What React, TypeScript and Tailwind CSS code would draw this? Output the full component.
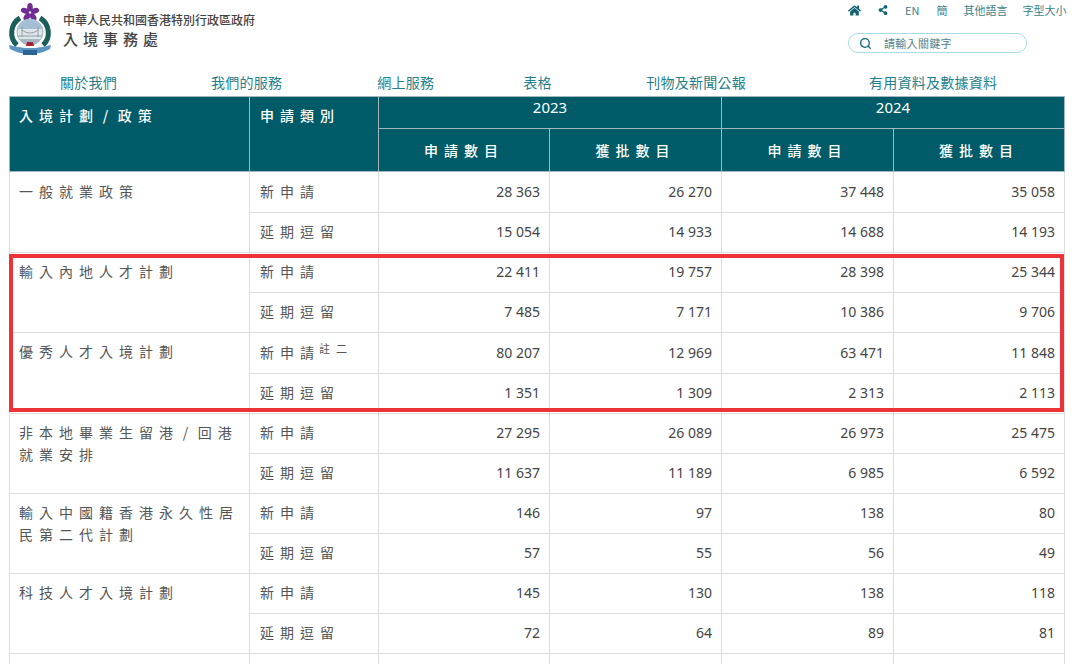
import { FaHome, FaShareAlt } from "react-icons/fa";
import { Search } from "lucide-react";

const CJK = "font-['Noto_Sans_CJK_TC','Noto_Sans_CJK_SC',sans-serif]";

const TOP_LINKS = [
  { label: "EN", className: "ml-[17px]" },
  { label: "簡", className: "ml-[17px]" },
  { label: "其他語言", className: "ml-[16px]" },
  { label: "字型大小", className: "ml-[15px]" },
];

const NAV = [
  { label: "關於我們", className: "ml-[60px]" },
  { label: "我們的服務", className: "ml-[94px]" },
  { label: "網上服務", className: "ml-[95px]" },
  { label: "表格", className: "ml-[89px]" },
  { label: "刊物及新聞公報", className: "ml-[94.5px]" },
  { label: "有用資料及數據資料", className: "ml-[123px]" },
];

const GROUPS = [
  {
    name: ["一般就業政策"],
    rows: [
      ["新申請", "28 363", "26 270", "37 448", "35 058"],
      ["延期逗留", "15 054", "14 933", "14 688", "14 193"],
    ],
  },
  {
    name: ["輸入內地人才計劃"],
    rows: [
      ["新申請", "22 411", "19 757", "28 398", "25 344"],
      ["延期逗留", "7 485", "7 171", "10 386", "9 706"],
    ],
  },
  {
    name: ["優秀人才入境計劃"],
    note: "註二",
    rows: [
      ["新申請", "80 207", "12 969", "63 471", "11 848"],
      ["延期逗留", "1 351", "1 309", "2 313", "2 113"],
    ],
  },
  {
    name: ["非本地畢業生留港 / 回港", "就業安排"],
    rows: [
      ["新申請", "27 295", "26 089", "26 973", "25 475"],
      ["延期逗留", "11 637", "11 189", "6 985", "6 592"],
    ],
  },
  {
    name: ["輸入中國籍香港永久性居", "民第二代計劃"],
    rows: [
      ["新申請", "146", "97", "138", "80"],
      ["延期逗留", "57", "55", "56", "49"],
    ],
  },
  {
    name: ["科技人才入境計劃"],
    rows: [
      ["新申請", "145", "130", "138", "118"],
      ["延期逗留", "72", "64", "89", "81"],
    ],
  },
];

function Logo() {
  return (
    <svg width="44" height="55" viewBox="0 0 44 55" className="shrink-0">
      <g fill="#6f2c91">
        <ellipse cx="22" cy="4.5" rx="2.8" ry="4.5" />
        <ellipse cx="22" cy="4.5" rx="2.8" ry="4.5" transform="rotate(72 22 9.5)" />
        <ellipse cx="22" cy="4.5" rx="2.8" ry="4.5" transform="rotate(144 22 9.5)" />
        <ellipse cx="22" cy="4.5" rx="2.8" ry="4.5" transform="rotate(216 22 9.5)" />
        <ellipse cx="22" cy="4.5" rx="2.8" ry="4.5" transform="rotate(288 22 9.5)" />
      </g>
      <circle cx="22" cy="9.5" r="1.2" fill="#e9dcee" />
      <path d="M12 15C2 21 1 35 9 42" fill="none" stroke="#1a5f5c" strokeWidth="5" />
      <path d="M32 15C42 21 43 35 35 42" fill="none" stroke="#1a5f5c" strokeWidth="5" />
      <circle cx="22" cy="29" r="13" fill="#dfe6ea" stroke="#9fb2be" strokeWidth="1" />
      <path d="M9.5 26a13 13 0 0 1 25 0z" fill="#a5c0d6" />
      <path d="M11 36a13 13 0 0 0 22 0z" fill="#a6b6c2" />
      <path d="M14 24v10M30 24v10M14 27c5 4 11 4 16 0M10 33h24" stroke="#7f909b" strokeWidth="0.8" fill="none" />
      <path d="M19 39h6l1 4h-8z" fill="#a3243b" />
      <path d="M1 42c6 1 10 3 21 3s15-2 21-3l-1 4c-5 3-13 5-20 5S7 49 2 46z" fill="#5b95c0" />
      <path d="M15 47h14v5H15z" fill="#2a6596" />
    </svg>
  );
}

function HeadCell({
  children,
  className = "",
  colSpan,
  rowSpan,
}: {
  children: React.ReactNode;
  className?: string;
  colSpan?: number;
  rowSpan?: number;
}) {
  return (
    <th
      colSpan={colSpan}
      rowSpan={rowSpan}
      className={`border border-[#9fb9bd] font-medium text-white text-[14px] leading-[20px] ${className}`}
    >
      {children}
    </th>
  );
}

export default function App() {
  return (
    <div className={`w-[1080px] h-[664px] overflow-hidden bg-white ${CJK}`}>
      <header className="flex h-[74px]">
        <div className="w-[839px] shrink-0 flex pl-[8px] pt-[3px]">
          <Logo />
          <div className="ml-[11px] pt-[8px] text-[#444444]">
            <div className="text-[12px] leading-[17px] font-medium">中華人民共和國香港特別行政區政府</div>
            <div className="text-[15px] leading-[22px] font-medium tracking-[5px]">入境事務處</div>
          </div>
        </div>
        <div className="pl-[9px] pt-[2px] text-[11px] text-[#3b7f8a]">
          <div className="flex items-center h-[16px] leading-none whitespace-nowrap">
            <FaHome className="text-[#0f6470] text-[13px]" />
            <FaShareAlt className="text-[#0f6470] text-[10px] ml-[17px]" />
            {TOP_LINKS.map((item) => (
              <span key={item.label} className={item.className}>
                {item.label}
              </span>
            ))}
          </div>
          <div className="mt-[15px] flex items-center w-[179px] h-[20px] rounded-full border border-[#a6dcea] pl-[10px]">
            <Search size={13} strokeWidth={2.4} className="text-[#0f6470]" />
            <span className="ml-[12px] tracking-[0.3px] leading-none text-[#56808a]">請輸入關鍵字</span>
          </div>
        </div>
      </header>

      <nav className="h-[22px] flex text-[14px] tracking-[0.25px] leading-[17px] text-[#1f7f8c] whitespace-nowrap">
        {NAV.map((item) => (
          <span key={item.label} className={item.className}>
            {item.label}
          </span>
        ))}
      </nav>

      <div className="relative ml-[9px] w-[1055px]">
        <table className="w-[1055px] table-fixed border-collapse">
          <colgroup>
            <col className="w-[240px]" />
            <col className="w-[129px]" />
            <col className="w-[171px]" />
            <col className="w-[172px]" />
            <col className="w-[172px]" />
            <col className="w-[171px]" />
          </colgroup>
          <thead className="bg-[#005b68]">
            <tr className="h-[32px]">
              <HeadCell rowSpan={2} className="text-left align-top pl-[9px] pt-[8px] tracking-[6px] [word-spacing:-5.5px] whitespace-nowrap">
                入境計劃 / 政策
              </HeadCell>
              <HeadCell rowSpan={2} className="text-left align-top pl-[10px] pt-[8px] tracking-[6px]">
                申請類別
              </HeadCell>
              <HeadCell colSpan={2} className="!font-normal align-top text-center font-['Noto_Sans'] !text-[15px]">
                2023
              </HeadCell>
              <HeadCell colSpan={2} className="!font-normal align-top text-center font-['Noto_Sans'] !text-[15px]">
                2024
              </HeadCell>
            </tr>
            <tr className="h-[43px]">
              {["a", "b", "c", "d"].map((k, i) => (
                <HeadCell key={k} className="text-center tracking-[6px]">
                  {i % 2 === 0 ? "申請數目" : "獲批數目"}
                </HeadCell>
              ))}
            </tr>
          </thead>
          <tbody className="text-[14px] leading-[22px] text-[#555555]">
            {GROUPS.map((group, g) =>
              group.rows.map((row, r) => (
                <tr key={group.name[0] + r} className={r === 0 && (g === 0 || g === 2) ? "h-[41px]" : "h-[40px]"}>
                  {r === 0 && (
                    <td
                      rowSpan={2}
                      className={`border border-[#dddddd] align-top pl-[9px] tracking-[6px] [word-spacing:-5.5px] whitespace-nowrap ${g === 0 ? "pt-[8px]" : "pt-[7px]"}`}
                    >
                      {group.name.map((line) => (
                        <div key={line}>{line}</div>
                      ))}
                    </td>
                  )}
                  <td className="border border-[#dddddd] pl-[10px] pb-[3px] tracking-[6px] whitespace-nowrap">
                    {row[0]}
                    {r === 0 && group.note && (
                      <sup className="text-[11px] -ml-px -top-[5px] relative align-baseline">{group.note}</sup>
                    )}
                  </td>
                  {row.slice(1).map((value, i) => (
                    <td key={i} className="border border-[#dddddd] text-right pr-[9px] pb-[1px] font-['Noto_Sans'] text-[#444444]">
                      {value}
                    </td>
                  ))}
                </tr>
              )),
            )}
            <tr className="h-[40px]">
              <td className="border border-[#dddddd]" />
              <td className="border border-[#dddddd]" />
              <td className="border border-[#dddddd]" />
              <td className="border border-[#dddddd]" />
              <td className="border border-[#dddddd]" />
              <td className="border border-[#dddddd]" />
            </tr>
          </tbody>
        </table>
        {/* red highlight over the two schemes */}
        <div className="absolute left-0 top-[158px] w-[1055px] h-[158px] border-[4px] border-[#ee3338] pointer-events-none" />
      </div>
    </div>
  );
}
